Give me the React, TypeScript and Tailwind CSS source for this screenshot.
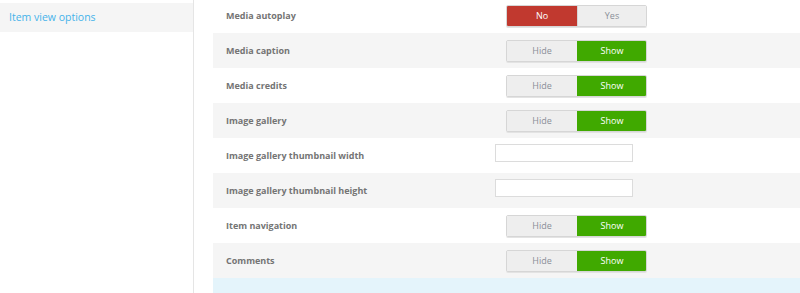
import React from "react";

type Row =
  | { label: string; kind: "toggle"; off: string; on: string; value: "off" | "on" }
  | { label: string; kind: "input" };

const rows: Row[] = [
  { label: "Media autoplay", kind: "toggle", off: "No", on: "Yes", value: "off" },
  { label: "Media caption", kind: "toggle", off: "Hide", on: "Show", value: "on" },
  { label: "Media credits", kind: "toggle", off: "Hide", on: "Show", value: "on" },
  { label: "Image gallery", kind: "toggle", off: "Hide", on: "Show", value: "on" },
  { label: "Image gallery thumbnail width", kind: "input" },
  { label: "Image gallery thumbnail height", kind: "input" },
  { label: "Item navigation", kind: "toggle", off: "Hide", on: "Show", value: "on" },
  { label: "Comments", kind: "toggle", off: "Hide", on: "Show", value: "on" },
];

function Toggle({ off, on, value }: { off: string; on: string; value: "off" | "on" }) {
  const isOff = value === "off";
  return (
    <div className="ml-[11px] flex h-[22px] w-[141px] rounded-[2px] border border-[#d6d6d6] shadow-[0_1px_0_#e3e3e3] overflow-hidden text-[9px]">
      <div
        className={`flex w-[70px] items-center justify-center ${
          isOff ? "bg-[#c1392f] text-white" : "bg-[#eeeeee] text-[#8a8f98]"
        }`}
      >
        {off}
      </div>
      <div
        className={`flex flex-1 items-center justify-center border-l ${
          isOff ? "border-[#d6d6d6] bg-[#eeeeee] text-[#8a8f98]" : "border-[#40a900] bg-[#40a900] text-white"
        }`}
      >
        {on}
      </div>
    </div>
  );
}

export default function App() {
  return (
    <div className="flex h-[293px] w-[800px] overflow-hidden bg-white font-['Open_Sans','Liberation_Sans',sans-serif]">
      {/* Sidebar */}
      <div className="w-[194px] shrink-0 border-r border-[#e5e5e5] pt-[3px]">
        <div className="flex h-[29px] items-center bg-[#f5f5f5] pl-[9px] text-[10.5px] text-[#45b3ea]">
          Item view options
        </div>
      </div>

      {/* Options */}
      <div className="flex-1 pl-[19px]">
        <div className="-mt-[2px]">
          {rows.map((row, i) => (
            <div
              key={row.label}
              className={`flex h-[35px] items-center pl-[13px] ${i % 2 === 1 ? "bg-[#f5f5f5]" : "bg-white"}`}
            >
              <div className="w-[269px] text-[9px] font-bold text-[#747474]">{row.label}</div>
              {row.kind === "toggle" ? (
                <Toggle off={row.off} on={row.on} value={row.value} />
              ) : (
                <input
                  className="mb-[6px] h-[18px] w-[138px] border border-[#dcdcdc] bg-white outline-none"
                  type="text"
                />
              )}
            </div>
          ))}
          <div className="h-[40px] bg-[#e4f4fb]" />
        </div>
      </div>
    </div>
  );
}
